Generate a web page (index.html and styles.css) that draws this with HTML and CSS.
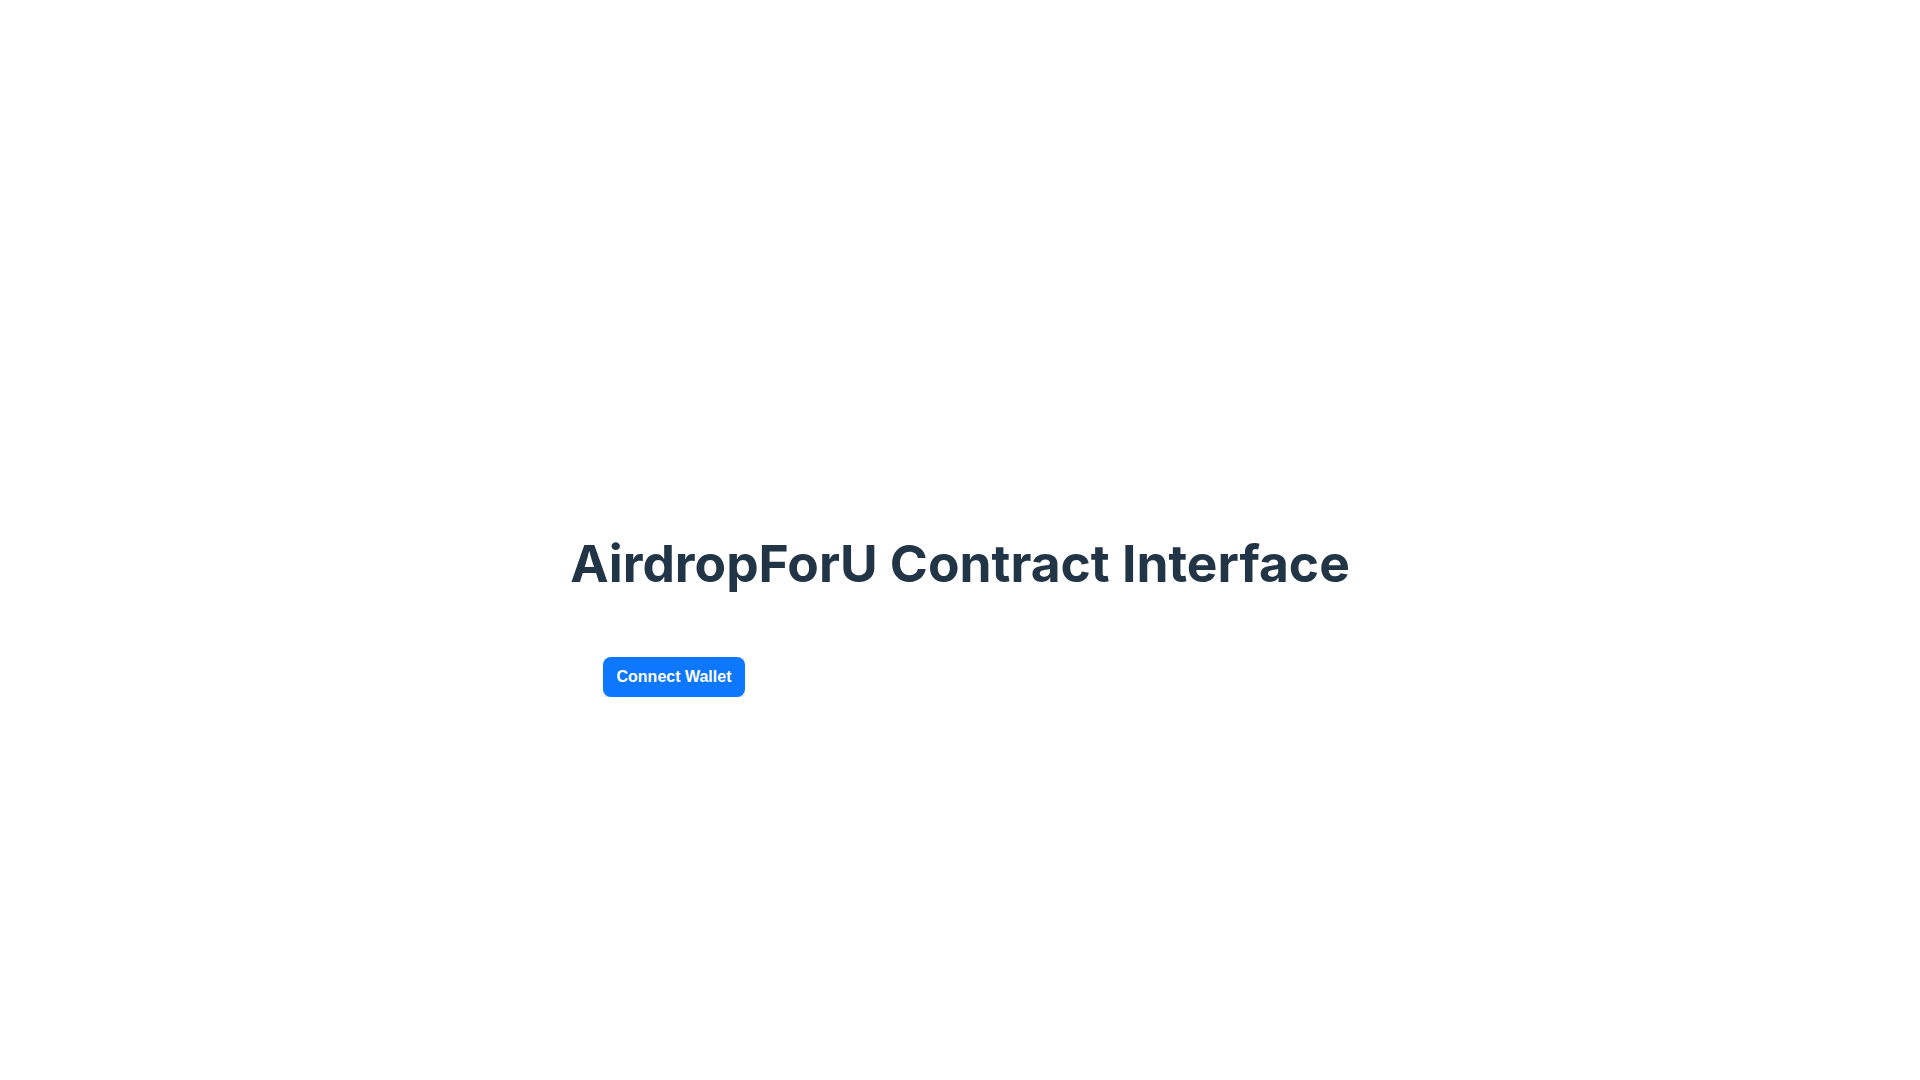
FILE: index.html
```html
<!DOCTYPE html>
<html>
<head>
<meta charset="utf-8">
<link rel="stylesheet" href="styles.css">
</head>
<body>
<main class="page">
  <h1 class="title">AirdropForU Contract Interface</h1>
  <div class="actions">
    <button class="connect">Connect Wallet</button>
  </div>
</main>
</body>
</html>
```

FILE: styles.css
```css
html, body {
  margin: 0;
  padding: 0;
  background: #ffffff;
}
.page {
  display: flex;
  flex-direction: column;
  align-items: center;
  padding-top: 532px;
}
.title {
  margin: 0;
  font-family: Inter, "Liberation Sans", sans-serif;
  font-weight: 700;
  font-size: 51.5px;
  line-height: 62px;
  color: #213547;
  white-space: nowrap;
}
.actions {
  width: 714px;
  margin-top: 63px;
  display: flex;
}
.connect {
  font-family: "Liberation Sans", Arial, sans-serif;
  font-weight: 700;
  font-size: 16px;
  color: #ffffff;
  background: #0d77fd;
  border: none;
  border-radius: 8px;
  height: 40px;
  padding: 0 13.5px;
  box-shadow: 0 4px 2px rgba(0, 0, 0, 0.1);
  cursor: pointer;
}
```
